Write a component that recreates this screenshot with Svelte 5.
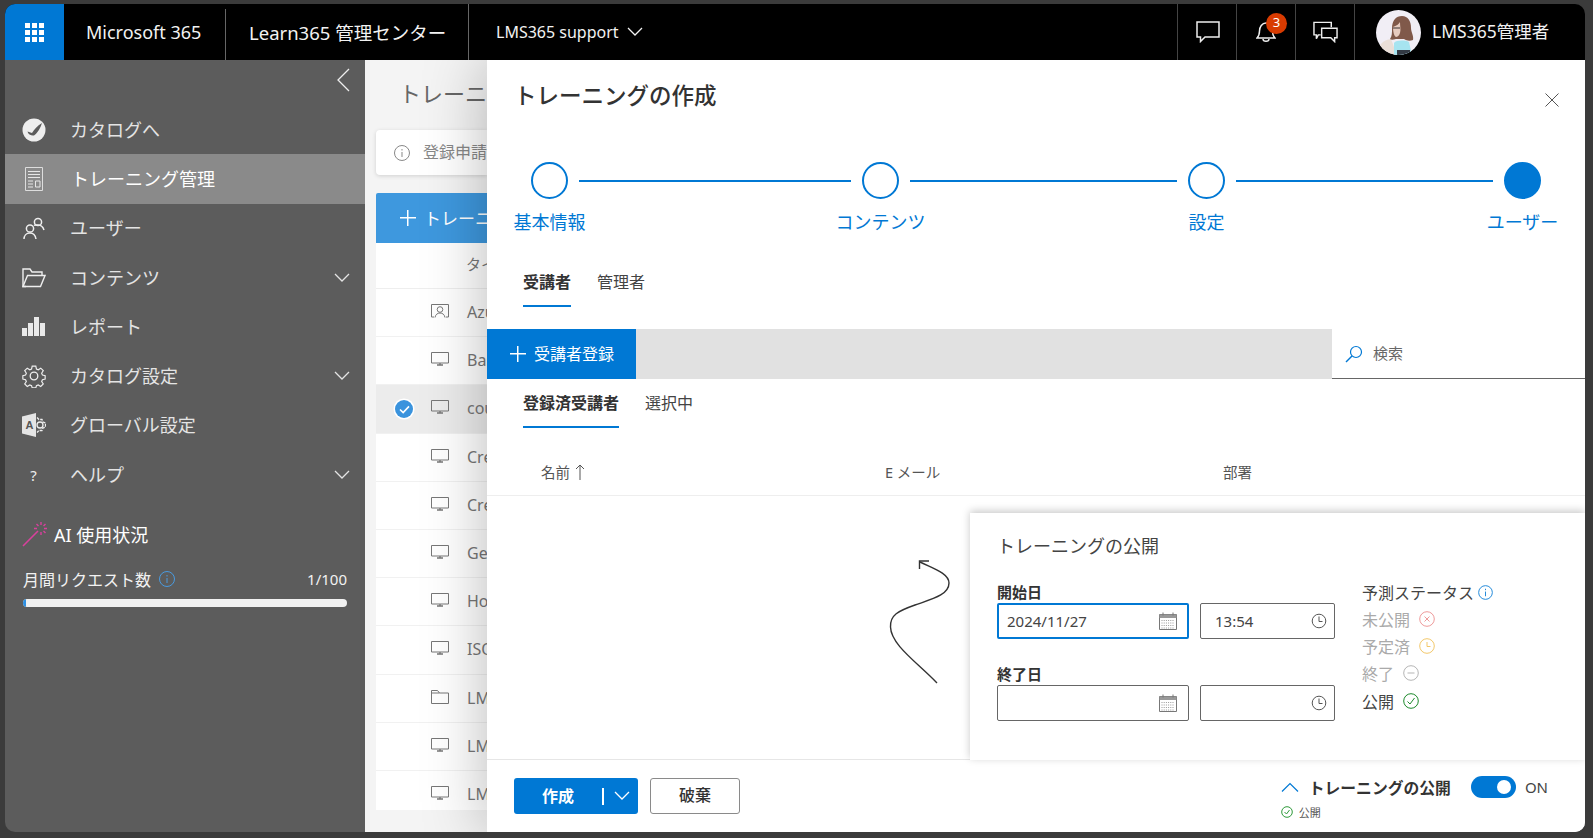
<script>
    const navItems = [
        { label: "カタログへ", icon: "catalog" },
        { label: "トレーニング管理", icon: "training", active: true },
        { label: "ユーザー", icon: "users" },
        { label: "コンテンツ", icon: "folder", more: true },
        { label: "レポート", icon: "report" },
        { label: "カタログ設定", icon: "gear", more: true },
        { label: "グローバル設定", icon: "office" },
        { label: "ヘルプ", icon: "help", more: true },
    ];

    const rows = [
        { name: "Azure", icon: "person" },
        { name: "Basic", icon: "screen" },
        { name: "course", icon: "screen", selected: true },
        { name: "Create", icon: "screen" },
        { name: "Create", icon: "screen" },
        { name: "Get", icon: "screen" },
        { name: "How", icon: "screen" },
        { name: "ISO", icon: "screen" },
        { name: "LMS", icon: "folderSmall" },
        { name: "LMS", icon: "screen" },
        { name: "LMS", icon: "screen" },
    ];

    const steps = ["基本情報", "コンテンツ", "設定", "ユーザー"];
</script>

{#snippet chevron()}
    <svg class="chev" viewBox="0 0 16 10" width="16" height="10"><path d="M1 1l7 7 7-7" /></svg>
{/snippet}

{#snippet calendar()}
    <svg viewBox="0 0 20 20" width="20" height="20" class="field-icon">
        <path d="M1.5 3.5h17v15h-17z" fill="none" stroke="#777" />
        <path d="M1.5 3.5h17v3.5h-17z" fill="#999" />
        <path d="M5 1.5v3M15 1.5v3" stroke="#777" />
        <path d="M3.5 9.5h13M3.5 12h13M3.5 14.5h13M3.5 17h13" stroke="#999" stroke-dasharray="1 1.2" />
    </svg>
{/snippet}

{#snippet clock()}
    <svg viewBox="0 0 16 16" width="16" height="16" class="field-icon">
        <circle cx="8" cy="8" r="6.8" fill="none" stroke="#555" />
        <path d="M8 3.5V8.5H11.5" fill="none" stroke="#555" />
    </svg>
{/snippet}

{#snippet navIcon(name)}
    {#if name === "catalog"}
        <svg viewBox="0 0 24 24" width="24" height="24">
            <circle cx="12" cy="12" r="11.5" fill="#eee" />
            <path d="M5.5 13.5l4.5 1.5c2.5-4 5-7 10-10-1.500 5-4.500 10-8 12.500-2.500.5-6-1-6.500-4z" fill="#5c5c5c" />
        </svg>
    {:else if name === "training"}
        <svg viewBox="0 0 18 24" width="18" height="24" fill="none" stroke="#e6e6e6">
            <path d="M.5.5h17v23H.5z" stroke="#ddd" />
            <path d="M3 4.5h12M3 7.5h12M3 10.5h12M3 14h5M3 17h5M3 20h5" />
            <path d="M10.5 14h4.500v6h-4.500z" />
        </svg>
    {:else if name === "users"}
        <svg viewBox="0 0 24 24" width="24" height="24" fill="none" stroke="#eee" stroke-width="1.5">
            <circle cx="16" cy="6" r="3.6" /><circle cx="8" cy="12.5" r="3.6" />
            <path d="M2 23c0-3 2-6 6-6s5.500 3 6 6M12 9.500c1-1 2.500-.5 4-.5 3 0 5 2 6 5" />
        </svg>
    {:else if name === "folder"}
        <svg viewBox="0 0 24 20" width="24" height="20" fill="none" stroke="#eee" stroke-width="1.4">
            <path d="M4 18.5H1V1h7l2 3h10v3" /><path d="M1 18.5L5.5 7.5H23l-4.500 11z" />
        </svg>
    {:else if name === "report"}
        <svg viewBox="0 0 23 19" width="23" height="19" fill="#e9e9e9">
            <rect x="0" y="11" width="5" height="8" /><rect x="6" y="6" width="5" height="13" />
            <rect x="12" y="0" width="5" height="19" /><rect x="18" y="6" width="5" height="13" />
        </svg>
    {:else if name === "gear"}
        <svg viewBox="0 0 24 24" width="24" height="24" fill="none" stroke="#eee" stroke-width="1.3">
            <circle cx="12" cy="12" r="3.8" />
            <path d="M10 1h4l.7 3.200 2 .9L19.500 3.300l2.800 2.800-1.800 2.800.9 2 3 .7v3.800l-3 .7-.9 2 1.800 2.800-2.800 2.800-2.800-1.800-2 .9-.7 2.400h-4l-.7-2.400-2-.9-2.800 1.800-2.800-2.800 1.800-2.800-.9-2-3-.7v-3.800l3-.7.9-2-1.800-2.800 2.800-2.800 2.800 1.800 2-.9z" transform="translate(1.2 1.2) scale(.9)" />
        </svg>
    {:else if name === "office"}
        <svg viewBox="0 0 24 24" width="24" height="24">
            <path d="M0 3.5L14 0v24L0 20.500z" fill="#e4e4e4" />
            <text x="3.5" y="16" font-size="11" font-weight="700" fill="#555" font-family="Liberation Sans, sans-serif">A</text>
            <circle cx="18" cy="12" r="3" fill="none" stroke="#eee" stroke-width="1.3" />
            <path d="M15 4.5l2 2h3l1 2.500 2.500 1v4l-2.500 1-1 2.500h-3l-2 2" fill="none" stroke="#eee" stroke-width="1.3" stroke-dasharray="3 1" />
        </svg>
    {:else if name === "help"}
        <span class="help-mark">?</span>
    {/if}
{/snippet}

{#snippet rowIcon(name)}
    {#if name === "person"}
        <svg viewBox="0 0 18 14" width="18" height="14" fill="none" stroke="#777">
            <path d="M3 13H.5V.5h17V13H15" /><circle cx="9" cy="5.5" r="2.8" /><path d="M4 13.5c.5-3 2.500-4.500 5-4.500s4.500 1.500 5 4.500" />
        </svg>
    {:else if name === "screen"}
        <svg viewBox="0 0 18 14" width="18" height="14" fill="none" stroke="#777">
            <path d="M.5.5h17v10.500H.5z" /><path d="M6 13h6M9 11v2" stroke-width="1.3" />
        </svg>
    {:else}
        <svg viewBox="0 0 18 14" width="18" height="14" fill="none" stroke="#777">
            <path d="M.5 13.500V.5h6l2 2.500h9v10.500z" /><path d="M.5 3h8" />
        </svg>
    {/if}
{/snippet}

<div class="screen">
    <div class="window">
        <header class="topbar">
            <div class="waffle">
                <svg viewBox="0 0 19 19" width="19" height="19" fill="#fff">
                    {#each [0, 7, 14] as y}
                        {#each [0, 7, 14] as x}
                            <rect {x} {y} width="5" height="5" />
                        {/each}
                    {/each}
                </svg>
            </div>
            <div class="brand">Microsoft 365</div>
            <div class="app-name">Learn365 管理センター</div>
            <div class="tenant">LMS365 support {@render chevron()}</div>
            <div class="top-actions">
                <div class="top-btn">
                    <svg class="chat" viewBox="0 0 24 22" width="24" height="22" fill="none" stroke="#eee" stroke-width="1.5">
                        <path d="M1 1h22v15H9l-4.500 4.500V16H1z" />
                    </svg>
                </div>
                <div class="top-btn bell">
                    <svg viewBox="0 0 20 24" width="20" height="24" fill="none" stroke="#eee" stroke-width="1.5">
                        <path d="M1 18h18c-2-2-2.500-3-2.500-7S14 3 10 3s-6.500 4-6.500 8-.5 5-2.500 7z" /><path d="M7 19c0 3 6 3 6 0" />
                    </svg>
                    <span class="badge">3</span>
                </div>
                <div class="top-btn">
                    <svg viewBox="0 0 26 22" width="25" height="22" fill="none" stroke="#eee" stroke-width="1.5">
                        <path d="M8 14H5.500L3.500 18v-4H1V1h18v5" /><path d="M9 7h16v10h-2.500v4L18.500 17H9z" />
                    </svg>
                </div>
                <div class="account">
                    <svg class="avatar" viewBox="0 0 45 45" width="45" height="45">
                        <defs><clipPath id="av"><circle cx="22.5" cy="22.5" r="22.5" /></clipPath></defs>
                        <g clip-path="url(#av)">
                            <rect width="45" height="45" fill="#f1eef5" />
                            <path d="M0 45c2-10 7-15 15-16l6 16z" fill="#eadfd8" />
                            <path d="M16 19c0-9 4-13 10-13s9 5 9 12c0 4 3 8 2 12-3 1-6 1-9-1h-8c-3 1-5 1-6 0 2-3 2-6 2-10z" fill="#80594a" />
                            <path d="M17 17c3-1 6-3 7-5 0 4 1 8 0 11-1 3-3 4-4 4-2-1-3-5-3-10z" fill="#e6cbbf" />
                            <path d="M17 18h7" stroke="#3b3030" stroke-width="1" />
                            <path d="M18 45V33c2-3 11-3 15-1l3 13z" fill="#a6e4f0" />
                            <rect x="21" y="40" width="13" height="5" fill="#333a44" />
                        </g>
                    </svg>
                    <span>LMS365管理者</span>
                </div>
            </div>
        </header>

        <div class="body">
            <nav class="sidebar">
                <div class="collapse">
                    <svg viewBox="0 0 14 24" width="14" height="24" fill="none" stroke="#eee" stroke-width="1.3"><path d="M13 1L2 12l11 11" /></svg>
                </div>
                {#each navItems as item}
                    <div class="nav-item" class:active={item.active}>
                        <span class="nav-icon">{@render navIcon(item.icon)}</span>
                        <span class="nav-label">{item.label}</span>
                        {#if item.more}{@render chevron()}{/if}
                    </div>
                {/each}
                <div class="ai-title">
                    <svg viewBox="0 0 26 26" width="26" height="26" fill="none" stroke="#d8409c" stroke-width="1.4">
                        <path d="M1 25L16 10" stroke-width="1.6" />
                        <path d="M19 1v3M19 11v3M12 7.5h3M22 7.5h3M14.5 3l2 2M21.5 10l2 2M23.5 3l-2 2" />
                    </svg>
                    <span>AI 使用状況</span>
                </div>
                <div class="usage">
                    <span>月間リクエスト数</span>
                    <svg viewBox="0 0 16 16" width="16" height="16" fill="none" stroke="#4a9be0">
                        <circle cx="8" cy="8" r="7.5" /><path d="M8 7v5M8 4v1.500" />
                    </svg>
                    <span class="usage-count">1/100</span>
                </div>
                <div class="progress"><div class="progress-fill" style="width: 1%"></div></div>
            </nav>

            <main class="content">
                <h1 class="page-title">トレーニング管理</h1>
                <div class="notice">
                    <svg viewBox="0 0 16 16" width="16" height="16" fill="none" stroke="#888">
                        <circle cx="8" cy="8" r="7.5" /><path d="M8 7v5M8 4v1.500" />
                    </svg>
                    <span>登録申請</span>
                </div>
                <div class="add-btn"><span class="add-plus"></span><span>トレーニ</span></div>
                <div class="list">
                    <div class="list-head">タイ</div>
                    {#each rows as row}
                        <div class="list-row" class:selected={row.selected}>
                            {#if row.selected}
                                <span class="check">
                                    <svg viewBox="0 0 12 10" width="11" height="9" fill="none" stroke="#fff" stroke-width="1.8"><path d="M1 5l3.500 3.500L11 1.500" /></svg>
                                </span>
                            {/if}
                            <span class="row-icon">{@render rowIcon(row.icon)}</span>
                            <span class="row-name">{row.name}</span>
                        </div>
                    {/each}
                </div>

                <section class="panel">
                    <div class="panel-head">
                        <h2>トレーニングの作成</h2>
                        <svg viewBox="0 0 14 14" width="14" height="14" stroke="#555"><path d="M.5.5l13 13M13.500.5l-13 13" /></svg>
                    </div>

                    <div class="stepper">
                        {#each steps as step, i}
                            {#if i > 0}<span class="step-line"></span>{/if}
                            <div class="step">
                                <span class="step-dot" class:current={i === steps.length - 1}></span>
                                <span class="step-label">{step}</span>
                            </div>
                        {/each}
                    </div>

                    <div class="tabs main-tabs">
                        <span class="tab on">受講者</span>
                        <span class="tab">管理者</span>
                    </div>

                    <div class="toolbar">
                        <div class="primary-cmd"><span class="add-plus"></span><span class="cmd-label">受講者登録</span></div>
                        <div class="search">
                            <svg viewBox="0 0 18 18" width="18" height="18" fill="none" stroke="#0078d4" stroke-width="1.2">
                                <circle cx="11" cy="7" r="5.5" /><path d="M7 11l-6 6" stroke-width="1.5" />
                            </svg>
                            <span>検索</span>
                        </div>
                    </div>

                    <div class="tabs sub-tabs">
                        <span class="tab on">登録済受講者</span>
                        <span class="tab">選択中</span>
                    </div>

                    <div class="table-head">
                        <span class="col-name">名前
                            <svg viewBox="0 0 10 16" width="10" height="16" fill="none" stroke="#555"><path d="M5 16V1M1 5l4-4 4 4" /></svg>
                        </span>
                        <span class="col-mail">E メール</span>
                        <span class="col-dept">部署</span>
                    </div>

                    <div class="panel-fill"></div>

                    <footer class="panel-foot">
                        <div class="split-btn">
                            <span class="split-label">作成</span>
                            <span class="split-sep"></span>
                            {@render chevron()}
                        </div>
                        <div class="discard">破棄</div>
                        <div class="publish-summary">
                            <div class="publish-row">
                                <svg viewBox="0 0 18 10" width="18" height="10" fill="none" stroke="#0078d4" stroke-width="1.2"><path d="M1 9.500l8-8 8 8" /></svg>
                                <strong>トレーニングの公開</strong>
                                <span class="toggle"><span class="knob"></span></span>
                                <span class="on-label">ON</span>
                            </div>
                            <div class="publish-state">
                                <svg viewBox="0 0 12 12" width="12" height="12" fill="none" stroke="#2e9a3a"><circle cx="6" cy="6" r="5.3" /><path d="M3.5 6l2 2 3-4" /></svg>
                                <span>公開</span>
                            </div>
                        </div>
                    </footer>

                    <svg class="swirl" viewBox="0 0 80 135" width="80" height="135" fill="none" stroke="#333" stroke-width="1.4">
                        <path d="M57 128C38 108 11 90 10.5 72 10 60 18 56 35 50 52 44 69 40 69 28 69 18 52 13 40 7" />
                        <path d="M49 6H39.5V14" />
                    </svg>

                    <div class="popover">
                        <h3>トレーニングの公開</h3>
                        <div class="pop-body">
                            <div class="dates">
                                <div class="field">
                                    <label for="start-date">開始日</label>
                                    <div class="inputs">
                                        <div class="input focus" id="start-date"><span>2024/11/27</span>{@render calendar()}</div>
                                        <div class="input time"><span>13:54</span>{@render clock()}</div>
                                    </div>
                                </div>
                                <div class="field">
                                    <label for="end-date">終了日</label>
                                    <div class="inputs">
                                        <div class="input" id="end-date"><span></span>{@render calendar()}</div>
                                        <div class="input time"><span></span>{@render clock()}</div>
                                    </div>
                                </div>
                            </div>
                            <div class="status">
                                <div class="status-head">予測ステータス
                                    <svg viewBox="0 0 16 16" width="15" height="15" fill="none" stroke="#1683d8"><circle cx="8" cy="8" r="7.3" /><path d="M8 7v5M8 4v1.500" /></svg>
                                </div>
                                <div class="status-row dim">未公開
                                    <svg viewBox="0 0 16 16" width="16" height="16" fill="none" stroke="#ee9a9a"><circle cx="8" cy="8" r="7.3" /><path d="M5.5 5.5l5 5M10.500 5.5l-5 5" /></svg>
                                </div>
                                <div class="status-row dim">予定済
                                    <svg viewBox="0 0 16 16" width="16" height="16" fill="none" stroke="#f3c86a"><circle cx="8" cy="8" r="7.3" /><path d="M8 4v4.500h3.500" /></svg>
                                </div>
                                <div class="status-row dim">終了
                                    <svg viewBox="0 0 16 16" width="16" height="16" fill="none" stroke="#b5b5b5"><circle cx="8" cy="8" r="7.3" /><path d="M4.5 8h7" /></svg>
                                </div>
                                <div class="status-row">公開
                                    <svg viewBox="0 0 16 16" width="16" height="16" fill="none" stroke="#1d8a2c"><circle cx="8" cy="8" r="7.3" /><path d="M4.5 8.500l2.500 2.500 4.500-6" /></svg>
                                </div>
                            </div>
                        </div>
                    </div>
                </section>
            </main>
        </div>
    </div>
</div>

<style>
    :global(body) {
        margin: 0;
        font-family: "Noto Sans", "Noto Sans CJK JP", sans-serif;
    }

    .screen {
        width: 1593px;
        height: 838px;
        box-sizing: border-box;
        padding: 4px 8px 6px 5px;
        background: #3b3b3b;
    }

    .window {
        height: 100%;
        display: flex;
        flex-direction: column;
        border-radius: 10px;
        overflow: hidden;
    }

    .topbar {
        height: 56px;
        flex: none;
        display: flex;
        align-items: center;
        background: #000;
        color: #f2f2f2;
    }

    .waffle {
        width: 59px;
        height: 100%;
        display: flex;
        align-items: center;
        justify-content: center;
        background: #0078d4;
    }

    .brand {
        width: 161px;
        flex: none;
        padding-left: 22px;
        box-sizing: border-box;
        font-size: 18px;
    }

    .app-name {
        height: 51px;
        align-self: flex-end;
        width: 243px;
        flex: none;
        box-sizing: border-box;
        display: flex;
        align-items: center;
        padding: 0 0 5px 23px;
        border-left: 1px solid #666;
        font-size: 18.5px;
        white-space: nowrap;
    }

    .tenant {
        height: 100%;
        display: flex;
        align-items: center;
        gap: 8px;
        padding-left: 27px;
        border-left: 1px solid #666;
        font-size: 16px;
    }

    .top-actions {
        height: 100%;
        margin-left: auto;
        display: flex;
    }

    .top-btn {
        width: 58px;
        position: relative;
        display: flex;
        align-items: center;
        justify-content: center;
        border-left: 1px solid #444;
    }

    .chat {
        margin-left: 1px;
    }

    .badge {
        position: absolute;
        left: 29px;
        top: 9px;
        width: 21px;
        height: 21px;
        border-radius: 50%;
        background: #d83b01;
        color: #fff;
        font-size: 13px;
        line-height: 19px;
        text-align: center;
    }

    .account {
        width: 231px;
        box-sizing: border-box;
        display: flex;
        align-items: center;
        gap: 11px;
        padding-left: 21px;
        border-left: 1px solid #444;
        font-size: 17.5px;
    }

    .account span {
        margin-top: -3px;
    }

    .chev {
        fill: none;
        stroke: currentColor;
        stroke-width: 1.3;
        flex: none;
    }

    .body {
        flex: 1;
        display: flex;
        min-height: 0;
    }

    .sidebar {
        width: 360px;
        flex: none;
        box-sizing: border-box;
        background: #5c5c5c;
        color: #e4e4e4;
        padding-top: 8px;
    }

    .collapse {
        height: 37px;
        display: flex;
        justify-content: flex-end;
        padding-right: 15px;
    }

    .nav-item {
        height: 49.3px;
        display: flex;
        align-items: center;
        padding: 0 15px 0 16px;
        font-size: 18px;
    }

    .nav-item.active {
        background: #8a8a8a;
        color: #fff;
    }

    .nav-icon {
        width: 25px;
        height: 26px;
        display: flex;
        align-items: center;
        justify-content: center;
        margin-right: 24px;
        color: #eee;
    }

    .nav-label {
        flex: 1;
        margin-top: -2px;
    }

    .nav-item.active .nav-label {
        margin-left: 1px;
    }

    .help-mark {
        font-size: 15px;
    }

    .ai-title {
        display: flex;
        align-items: center;
        gap: 6px;
        margin: 20px 0 0 17px;
        color: #fff;
        font-size: 18px;
        height: 30px;
    }

    .usage {
        display: flex;
        align-items: center;
        gap: 8px;
        margin: 18px 18px 0 18px;
        font-size: 16px;
        color: #f2f2f2;
        height: 24px;
    }

    .usage-count {
        margin-left: auto;
        font-size: 15px;
    }

    .progress {
        height: 8px;
        margin: 8px 18px 0;
        border-radius: 4px;
        background: #f1f1f1;
        overflow: hidden;
    }

    .progress-fill {
        height: 100%;
        background: #2f8fe0;
    }

    .content {
        flex: 1;
        position: relative;
        min-width: 0;
        background: #f4f4f4;
        overflow: hidden;
        padding: 0 0 22px 11px;
    }

    /* the panel covers everything right of 122px, so the page behind stops there */
    .page-title,
    .notice,
    .add-btn,
    .list {
        width: 111px;
        box-sizing: border-box;
        overflow: hidden;
    }

    .page-title {
        margin: 0;
        height: 70px;
        padding: 20px 0 0 23px;
        font-size: 22px;
        line-height: 26px;
        font-weight: 400;
        color: #666;
        white-space: nowrap;
    }

    .notice {
        height: 45px;
        display: flex;
        align-items: center;
        gap: 13px;
        padding-left: 18px;
        background: #fff;
        border-radius: 4px 0 0 4px;
        box-shadow: 0 1px 4px rgba(0, 0, 0, 0.15);
        color: #888;
        font-size: 16px;
        white-space: nowrap;
    }

    .notice span {
        margin-top: -3px;
    }

    .add-btn {
        height: 50px;
        margin-top: 18px;
        display: flex;
        align-items: center;
        gap: 8px;
        padding-left: 24px;
        background: #3e98de;
        color: #fff;
        font-size: 17px;
        border-radius: 2px 0 0 0;
        white-space: nowrap;
    }

    .add-btn span:last-child {
        margin-top: -2px;
    }

    .add-plus {
        width: 16px;
        height: 16px;
        flex: none;
        background:
            linear-gradient(#fff, #fff) center / 100% 1.5px no-repeat,
            linear-gradient(#fff, #fff) center / 1.5px 100% no-repeat;
    }

    .list {
        height: 567px;
        background: #fff;
        color: #777;
        font-size: 16px;
    }

    .list-head {
        height: 46px;
        box-sizing: border-box;
        padding: 10px 0 0 90px;
        border-bottom: 1px solid #eee;
        font-size: 15px;
        color: #777;
        white-space: nowrap;
    }

    .list-row {
        height: 48.2px;
        box-sizing: border-box;
        position: relative;
        display: flex;
        align-items: center;
        padding-left: 55px;
        border-bottom: 1px solid #f1f1f1;
        white-space: nowrap;
        overflow: hidden;
    }

    .list-row.selected {
        background: #ececec;
    }

    .check {
        position: absolute;
        left: 19px;
        top: 15px;
        width: 18px;
        height: 18px;
        border-radius: 50%;
        background: #3a93dd;
        box-shadow: 0 0 0 1.5px #fff;
        display: flex;
        align-items: center;
        justify-content: center;
    }

    .row-icon {
        width: 18px;
        height: 14px;
        margin: -3px 18px 0 0;
        display: flex;
    }

    .row-name {
        margin-top: -1px;
    }

    .panel {
        position: absolute;
        left: 122px;
        top: 0;
        right: 0;
        bottom: 0;
        display: flex;
        flex-direction: column;
        background: #fff;
        box-shadow: 0 0 60px rgba(0, 0, 0, 0.28);
        color: #333;
    }

    .panel-head {
        height: 102px;
        flex: none;
        box-sizing: border-box;
        display: flex;
        justify-content: space-between;
        padding: 21px 26px 0 27px;
    }

    .panel-head svg {
        margin-top: 12px;
    }

    .panel-head h2 {
        margin: 0;
        font-size: 22.5px;
        line-height: 30px;
        font-weight: 500;
        color: #333;
    }

    .stepper {
        height: 104px;
        flex: none;
        display: grid;
        grid-template-columns: 37px 294px 37px 289px 37px 279px 37px;
        padding-left: 44px;
    }

    .step {
        width: 37px;
        display: flex;
        flex-direction: column;
        align-items: center;
    }

    .step-dot {
        width: 37px;
        height: 37px;
        flex: none;
        box-sizing: border-box;
        border: 2px solid #0078d4;
        border-radius: 50%;
    }

    .step-dot.current {
        background: #0078d4;
    }

    .step-label {
        margin-top: 10px;
        font-size: 18px;
        line-height: 26px;
        color: #0078d4;
        white-space: nowrap;
    }

    .step-line {
        height: 2px;
        margin: 17.5px 11px 0;
        background: #0078d4;
    }

    .tabs {
        display: flex;
        flex: none;
        font-size: 16px;
        padding-left: 36px;
        gap: 26px;
    }

    .main-tabs {
        height: 41px;
    }

    .sub-tabs {
        height: 49px;
    }

    .tab {
        color: #444;
        line-height: 26px;
        box-sizing: border-box;
        height: 100%;
    }

    .main-tabs .tab {
        padding-top: 3px;
    }

    .sub-tabs .tab {
        padding-top: 11px;
    }

    .tab.on {
        font-weight: 700;
        color: #333;
        border-bottom: 2px solid #0078d4;
    }

    .toolbar {
        height: 50px;
        flex: none;
        margin-top: 22px;
        display: flex;
        justify-content: space-between;
        background: #e1e1e1;
    }

    .primary-cmd {
        width: 149px;
        box-sizing: border-box;
        display: flex;
        align-items: center;
        gap: 8px;
        padding-left: 23px;
        background: #0078d4;
        color: #fff;
        font-size: 16px;
    }

    .cmd-label {
        margin-top: -2px;
    }

    .search {
        width: 253px;
        box-sizing: border-box;
        display: flex;
        align-items: center;
        gap: 10px;
        padding-left: 13px;
        background: #fff;
        border-bottom: 1px solid #666;
        color: #666;
        font-size: 15px;
    }

    .search span {
        margin-top: -3px;
    }

    .table-head {
        height: 68px;
        flex: none;
        box-sizing: border-box;
        padding-top: 33px;
        display: flex;
        align-items: flex-start;
        border-bottom: 1px solid #eee;
        font-size: 14.5px;
        line-height: 22px;
        color: #555;
    }

    .col-name {
        width: 344px;
        margin-left: 54px;
        display: flex;
        align-items: center;
        gap: 5px;
    }

    .col-mail {
        width: 338px;
    }

    .panel-fill {
        flex: 1;
    }

    .panel-foot {
        height: 73px;
        flex: none;
        box-sizing: border-box;
        display: flex;
        align-items: flex-start;
        padding: 18px 37px 0 27px;
        border-top: 1px solid #e6e6e6;
    }

    .split-btn {
        width: 124px;
        height: 36px;
        display: flex;
        align-items: center;
        box-sizing: border-box;
        background: #0078d4;
        color: #fff;
        border-radius: 3px;
        font-size: 16px;
        font-weight: 700;
    }

    .split-label {
        width: 88px;
        text-align: center;
        margin-top: -2px;
    }

    .split-sep {
        width: 2px;
        height: 17px;
        background: #fff;
        margin-right: 10px;
    }

    .discard {
        width: 90px;
        height: 36px;
        box-sizing: border-box;
        margin-left: 12px;
        border: 1px solid #8a8a8a;
        border-radius: 3px;
        font-size: 16px;
        line-height: 33px;
        font-weight: 500;
        text-align: center;
    }

    .publish-summary {
        margin-left: auto;
        margin-top: -3px;
    }

    .publish-row {
        height: 24px;
        display: flex;
        align-items: center;
    }

    .publish-row strong {
        margin-left: 10px;
        font-size: 15.8px;
    }

    .toggle {
        width: 45px;
        height: 22px;
        margin-left: 20px;
        position: relative;
        border-radius: 11px;
        background: #0078d4;
    }

    .knob {
        position: absolute;
        right: 5px;
        top: 4px;
        width: 14px;
        height: 14px;
        border-radius: 50%;
        background: #fff;
    }

    .on-label {
        margin-left: 9px;
        font-size: 15px;
        color: #444;
    }

    .publish-state {
        margin-top: 5px;
        display: flex;
        align-items: center;
        gap: 6px;
        font-size: 11px;
        color: #555;
    }

    .swirl {
        position: absolute;
        left: 393px;
        top: 495px;
    }

    .popover {
        position: absolute;
        left: 483px;
        right: 0;
        top: 453px;
        bottom: 72px;
        box-sizing: border-box;
        padding: 22px 0 0 27px;
        background: #fff;
        box-shadow: 0 -2px 8px rgba(0, 0, 0, 0.22);
    }

    .popover h3 {
        margin: 0;
        font-size: 18px;
        line-height: 22px;
        font-weight: 400;
        color: #444;
    }

    .pop-body {
        display: flex;
        gap: 27px;
        margin-top: 26px;
    }

    .dates {
        display: flex;
        flex-direction: column;
        gap: 26px;
    }

    .field label {
        display: block;
        height: 20px;
        font-size: 15px;
        line-height: 18px;
        font-weight: 700;
        color: #333;
    }

    .inputs {
        display: flex;
        gap: 11px;
    }

    .input {
        width: 192px;
        height: 36px;
        box-sizing: border-box;
        display: flex;
        align-items: center;
        justify-content: space-between;
        padding: 0 10px 0 9px;
        border: 1px solid #666;
        border-radius: 2px;
        font-size: 15px;
        color: #444;
    }

    .input.focus {
        border: 2px solid #0078d4;
        padding-left: 8px;
        padding-right: 9px;
    }

    .input.time {
        width: 135px;
        padding-left: 14px;
        padding-right: 7px;
    }

    .status {
        margin-top: -4px;
        font-size: 16px;
    }

    .status-head {
        height: 26px;
        display: flex;
        align-items: center;
        gap: 4px;
        color: #444;
    }

    .status-row {
        height: 27.3px;
        display: flex;
        align-items: center;
        gap: 9px;
        color: #444;
    }

    .status-row.dim {
        color: #aaa;
    }
</style>
